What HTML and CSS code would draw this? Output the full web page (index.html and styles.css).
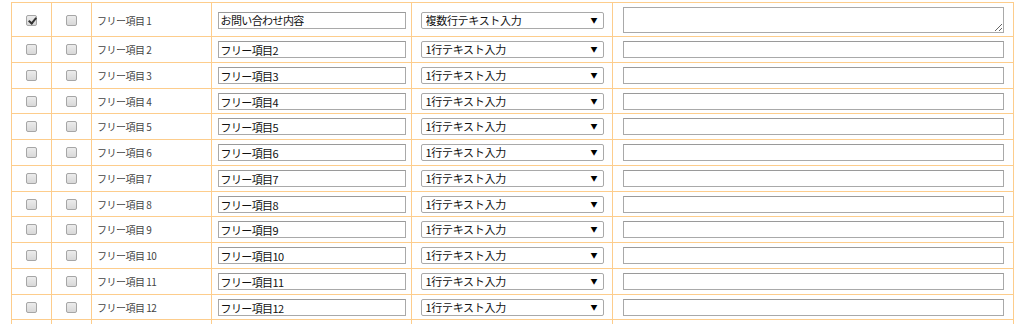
FILE: index.html
```html
<!DOCTYPE html>
<html lang="ja">
<head>
    <meta charset="UTF-8">
    <title>フリー項目設定</title>
    <link rel="stylesheet" href="styles.css">
</head>
<body>
    <div class="wrap">
        <table class="items">
            <colgroup>
                <col class="c-check"><col class="c-check"><col class="c-name"><col class="c-label"><col class="c-type"><col class="c-note">
            </colgroup>
            <tr class="first">
                <td><input type="checkbox" class="chk" checked></td>
                <td><input type="checkbox" class="chk"></td>
                <td class="name">フリー項目 1</td>
                <td><input type="text" class="txt" value="お問い合わせ内容"></td>
                <td><span class="sel"><select><option>複数行テキスト入力</option><option>1行テキスト入力</option></select></span></td>
                <td><textarea class="area"></textarea></td>
            </tr>
            <tr>
                <td><input type="checkbox" class="chk"></td>
                <td><input type="checkbox" class="chk"></td>
                <td class="name">フリー項目 2</td>
                <td><input type="text" class="txt" value="フリー項目2"></td>
                <td><span class="sel"><select><option>1行テキスト入力</option></select></span></td>
                <td><input type="text" class="wide"></td>
            </tr>
            <tr>
                <td><input type="checkbox" class="chk"></td>
                <td><input type="checkbox" class="chk"></td>
                <td class="name">フリー項目 3</td>
                <td><input type="text" class="txt" value="フリー項目3"></td>
                <td><span class="sel"><select><option>1行テキスト入力</option></select></span></td>
                <td><input type="text" class="wide"></td>
            </tr>
            <tr>
                <td><input type="checkbox" class="chk"></td>
                <td><input type="checkbox" class="chk"></td>
                <td class="name">フリー項目 4</td>
                <td><input type="text" class="txt" value="フリー項目4"></td>
                <td><span class="sel"><select><option>1行テキスト入力</option></select></span></td>
                <td><input type="text" class="wide"></td>
            </tr>
            <tr>
                <td><input type="checkbox" class="chk"></td>
                <td><input type="checkbox" class="chk"></td>
                <td class="name">フリー項目 5</td>
                <td><input type="text" class="txt" value="フリー項目5"></td>
                <td><span class="sel"><select><option>1行テキスト入力</option></select></span></td>
                <td><input type="text" class="wide"></td>
            </tr>
            <tr>
                <td><input type="checkbox" class="chk"></td>
                <td><input type="checkbox" class="chk"></td>
                <td class="name">フリー項目 6</td>
                <td><input type="text" class="txt" value="フリー項目6"></td>
                <td><span class="sel"><select><option>1行テキスト入力</option></select></span></td>
                <td><input type="text" class="wide"></td>
            </tr>
            <tr>
                <td><input type="checkbox" class="chk"></td>
                <td><input type="checkbox" class="chk"></td>
                <td class="name">フリー項目 7</td>
                <td><input type="text" class="txt" value="フリー項目7"></td>
                <td><span class="sel"><select><option>1行テキスト入力</option></select></span></td>
                <td><input type="text" class="wide"></td>
            </tr>
            <tr>
                <td><input type="checkbox" class="chk"></td>
                <td><input type="checkbox" class="chk"></td>
                <td class="name">フリー項目 8</td>
                <td><input type="text" class="txt" value="フリー項目8"></td>
                <td><span class="sel"><select><option>1行テキスト入力</option></select></span></td>
                <td><input type="text" class="wide"></td>
            </tr>
            <tr>
                <td><input type="checkbox" class="chk"></td>
                <td><input type="checkbox" class="chk"></td>
                <td class="name">フリー項目 9</td>
                <td><input type="text" class="txt" value="フリー項目9"></td>
                <td><span class="sel"><select><option>1行テキスト入力</option></select></span></td>
                <td><input type="text" class="wide"></td>
            </tr>
            <tr>
                <td><input type="checkbox" class="chk"></td>
                <td><input type="checkbox" class="chk"></td>
                <td class="name">フリー項目 10</td>
                <td><input type="text" class="txt" value="フリー項目10"></td>
                <td><span class="sel"><select><option>1行テキスト入力</option></select></span></td>
                <td><input type="text" class="wide"></td>
            </tr>
            <tr>
                <td><input type="checkbox" class="chk"></td>
                <td><input type="checkbox" class="chk"></td>
                <td class="name">フリー項目 11</td>
                <td><input type="text" class="txt" value="フリー項目11"></td>
                <td><span class="sel"><select><option>1行テキスト入力</option></select></span></td>
                <td><input type="text" class="wide"></td>
            </tr>
            <tr>
                <td><input type="checkbox" class="chk"></td>
                <td><input type="checkbox" class="chk"></td>
                <td class="name">フリー項目 12</td>
                <td><input type="text" class="txt" value="フリー項目12"></td>
                <td><span class="sel"><select><option>1行テキスト入力</option></select></span></td>
                <td><input type="text" class="wide"></td>
            </tr>
            <tr>
                <td><input type="checkbox" class="chk"></td>
                <td><input type="checkbox" class="chk"></td>
                <td class="name">フリー項目 13</td>
                <td><input type="text" class="txt" value="フリー項目13"></td>
                <td><span class="sel"><select><option>1行テキスト入力</option></select></span></td>
                <td><input type="text" class="wide"></td>
            </tr>
        </table>
    </div>
</body>
</html>
```
FILE: styles.css
```css
body { margin: 0; background: #fff; font-family: "Noto Sans CJK JP", "Noto Sans", sans-serif; color: #222; }
.wrap { padding: 2px 0 0 11px; }
.items { border-collapse: collapse; table-layout: fixed; width: 1002px; }
.items .c-check { width: 40px; }
.items .c-name { width: 120px; }
.items .c-label { width: 200px; }
.items .c-type { width: 201px; }
.items .c-note { width: 401px; }
.items td { border: 1px solid #fdcd8c; padding: 4px 0; text-align: center; vertical-align: middle; font-size: 11px; line-height: 17px; }
.items tr:nth-child(4n) td { padding-bottom: 3px; }
.items tr.first td { padding-top: 4px; padding-bottom: 3px; }
.items td.name { text-align: left; padding-left: 5px; font-size: 10px; letter-spacing: -0.5px; color: #444; }

.chk { appearance: none; -webkit-appearance: none; width: 11px; height: 11px; margin: 0 auto; display: block; position: relative;
    border: 1px solid #a6a6a6; border-radius: 2px; background: linear-gradient(#ececec, #d8d8d8); }
.chk:checked::after { content: ""; position: absolute; left: 3px; top: 0px; width: 3px; height: 6px; border: solid #333; border-width: 0 2px 2px 0; transform: rotate(40deg); }

.txt, .wide, .area, .sel select { box-sizing: border-box; font-family: "Noto Sans CJK JP", "Noto Sans", sans-serif; font-size: 11px; color: #111; margin: 0; }
.txt, .wide { display: block; margin: 0 auto; height: 17px; padding: 0 2px; border: 1px solid #a9a9a9; border-top-color: #9a9a9a; letter-spacing: -0.6px; outline: none; }
.txt { width: 188px; }
.wide { width: 381px; }
.area { display: block; margin: 0 auto; width: 381px; height: 26px; border: 1px solid #a9a9a9; padding: 2px; resize: vertical; }

.sel { display: block; position: relative; width: 183px; margin: 0 auto; }
.sel select { appearance: none; -webkit-appearance: none; width: 183px; height: 17px; padding: 0 14px 0 4px; border: 1px solid #a9a9a9; border-radius: 2px;
    background: #fff; letter-spacing: -0.3px; display: block; line-height: 15px; }
.sel::after { content: "▼"; position: absolute; right: 6px; top: 4px; font-size: 7px; line-height: 9px; color: #000; pointer-events: none; }
```
